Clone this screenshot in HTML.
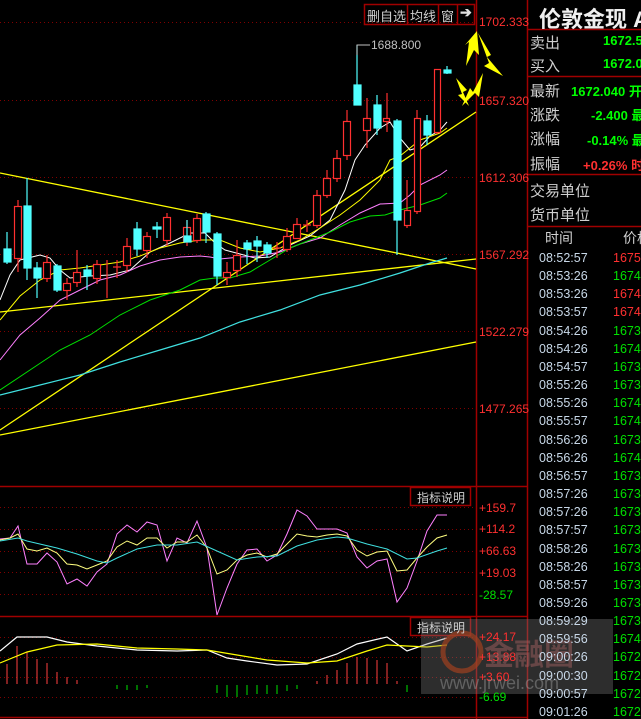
<!DOCTYPE html>
<html><head><meta charset="utf-8"><style>
body{margin:0;width:641px;height:719px;background:#000;overflow:hidden;position:relative;font-family:"Liberation Sans","Noto Sans CJK SC",sans-serif}
.t{position:absolute;white-space:nowrap}
.row{white-space:nowrap;height:18.16px;position:relative}
.row span{position:absolute;left:74px}
</style></head><body>
<svg width="641" height="719" style="position:absolute;left:0;top:0" xmlns="http://www.w3.org/2000/svg">
<g stroke="#800000" stroke-width="1" stroke-dasharray="1,3">
<line x1="0" y1="22.5" x2="476" y2="22.5"/><line x1="0" y1="100.5" x2="476" y2="100.5"/><line x1="0" y1="177.5" x2="476" y2="177.5"/><line x1="0" y1="254.5" x2="476" y2="254.5"/><line x1="0" y1="331.5" x2="476" y2="331.5"/><line x1="0" y1="408.5" x2="476" y2="408.5"/>
<line x1="0" y1="507.5" x2="476" y2="507.5"/><line x1="0" y1="529.5" x2="476" y2="529.5"/><line x1="0" y1="551.5" x2="476" y2="551.5"/><line x1="0" y1="572.5" x2="476" y2="572.5"/><line x1="0" y1="594.5" x2="476" y2="594.5"/>
<line x1="0" y1="637.5" x2="476" y2="637.5"/><line x1="0" y1="657.5" x2="476" y2="657.5"/><line x1="0" y1="677.5" x2="476" y2="677.5"/><line x1="0" y1="697.5" x2="476" y2="697.5"/>
</g>
<g stroke="#a00000" stroke-width="1.5" fill="none">
<line x1="0" y1="486.5" x2="527" y2="486.5"/><line x1="0" y1="616.5" x2="527" y2="616.5"/><line x1="0" y1="717.5" x2="527" y2="717.5"/>
<line x1="476.5" y1="0" x2="476.5" y2="719"/><line x1="527.5" y1="0" x2="527.5" y2="719"/>
<line x1="527" y1="29.5" x2="641" y2="29.5"/><line x1="527" y1="76.5" x2="641" y2="76.5"/><line x1="527" y1="174.5" x2="641" y2="174.5"/><line x1="527" y1="226.5" x2="641" y2="226.5"/>
<rect x="364.5" y="4.5" width="110" height="20"/><line x1="407.5" y1="4" x2="407.5" y2="24"/><line x1="438.5" y1="4" x2="438.5" y2="24"/><line x1="457.5" y1="4" x2="457.5" y2="24"/>
<rect x="410.5" y="487.5" width="60" height="18"/><rect x="410.5" y="617.5" width="60" height="18"/>
</g>
<g stroke="#ffff00" stroke-width="1.3" fill="none">
<line x1="0" y1="173" x2="476" y2="269"/><line x1="0" y1="312" x2="476" y2="259"/><line x1="0" y1="435" x2="476" y2="342"/><line x1="0" y1="430" x2="476" y2="112"/>
</g>
<polyline fill="none" stroke="#fff" stroke-width="1" points="0,300 10,275 20,260 40,255 50,258 60,270 70,278 90,276 110,275 130,270 150,252 170,243 190,233 205,233 215,243 225,250 240,254 255,258 270,257 290,245 310,236 330,220 345,190 355,160 365,145 380,128 390,122 400,138 410,150 420,147 430,136 440,130 447,122"/>
<polyline fill="none" stroke="#ffff00" stroke-width="1" points="0,320 20,296 40,280 60,270 80,268 100,265 120,262 140,256 160,248 180,243 200,240 220,240 240,248 260,252 280,248 300,240 320,228 340,215 360,200 380,180 390,160 400,156 420,140 440,133 447,128"/>
<polyline fill="none" stroke="#ff80ff" stroke-width="1" points="0,360 20,335 40,318 60,300 80,290 100,280 120,275 140,266 160,260 180,257 200,256 210,257 220,259 240,257 260,256 280,252 300,244 320,238 340,225 360,213 380,204 400,203 410,195 420,185 440,175 447,170"/>
<polyline fill="none" stroke="#00e000" stroke-width="1" points="0,390 30,370 60,350 90,335 120,315 150,300 180,290 200,280 215,278 230,278 250,272 270,260 290,248 310,240 330,232 350,222 370,216 385,215 400,210 420,205 440,198 447,193"/>
<polyline fill="none" stroke="#40e0e0" stroke-width="1.2" points="0,395 40,385 80,375 120,362 160,350 200,338 240,322 280,310 320,295 360,285 400,273 430,263 447,258"/>
<g stroke="#ff3030" stroke-width="1.2" fill="#000">
<line x1="18" y1="200" x2="18" y2="272"/><rect x="14.5" y="206.5" width="7" height="52"/>
<line x1="47" y1="255" x2="47" y2="282"/><rect x="43.5" y="262.5" width="7" height="16"/>
<line x1="67" y1="278" x2="67" y2="300"/><rect x="63.5" y="283.5" width="7" height="7"/>
<line x1="77" y1="250" x2="77" y2="287"/><rect x="73.5" y="272.5" width="7" height="10"/>
<line x1="97" y1="260" x2="97" y2="284"/><rect x="93.5" y="264.5" width="7" height="14"/>
<line x1="107" y1="260" x2="107" y2="298"/><line x1="117" y1="260" x2="117" y2="278"/><line x1="113" y1="267" x2="121" y2="267"/>
<line x1="127" y1="238" x2="127" y2="272"/><rect x="123.5" y="246.5" width="7" height="19"/>
<line x1="147" y1="232" x2="147" y2="258"/><rect x="143.5" y="236.5" width="7" height="14"/>
<line x1="167" y1="213" x2="167" y2="246"/><rect x="163.5" y="217.5" width="7" height="23"/>
<line x1="187" y1="220" x2="187" y2="246"/><rect x="183.5" y="227.5" width="7" height="14"/>
<line x1="197" y1="214" x2="197" y2="243"/><rect x="193.5" y="218.5" width="7" height="22"/>
<line x1="227" y1="262" x2="227" y2="285"/><rect x="223.5" y="272.5" width="7" height="5"/>
<line x1="237" y1="240" x2="237" y2="277"/><rect x="233.5" y="255.5" width="7" height="15"/>
<line x1="277" y1="242" x2="277" y2="258"/><line x1="273" y1="248" x2="281" y2="248"/>
<line x1="287" y1="228" x2="287" y2="252"/><rect x="283.5" y="236.5" width="7" height="13"/>
<line x1="297" y1="218" x2="297" y2="238"/><rect x="293.5" y="224.5" width="7" height="14"/>
<line x1="307" y1="220" x2="307" y2="232"/><line x1="303" y1="225" x2="311" y2="225"/>
<line x1="317" y1="190" x2="317" y2="228"/><rect x="313.5" y="195.5" width="7" height="30"/>
<line x1="327" y1="170" x2="327" y2="198"/><rect x="323.5" y="178.5" width="7" height="17"/>
<line x1="337" y1="150" x2="337" y2="182"/><rect x="333.5" y="158.5" width="7" height="20"/>
<line x1="347" y1="110" x2="347" y2="160"/><rect x="343.5" y="121.5" width="7" height="34"/>
<line x1="367" y1="98" x2="367" y2="148"/><rect x="363.5" y="118.5" width="7" height="12"/>
<line x1="387" y1="93" x2="387" y2="132"/><rect x="383.5" y="118.5" width="6" height="3"/>
<line x1="407" y1="180" x2="407" y2="228"/><rect x="404.5" y="210.5" width="6" height="15"/>
<line x1="417" y1="110" x2="417" y2="214"/><rect x="414.5" y="118.5" width="6" height="93"/>
<line x1="437" y1="69" x2="437" y2="134"/><rect x="434.5" y="69.5" width="6" height="63"/>
</g>
<g stroke="#50ffff" stroke-width="1.2" fill="#50ffff">
<line x1="7" y1="232" x2="7" y2="264"/><rect x="4" y="249" width="7" height="13"/>
<line x1="27" y1="178" x2="27" y2="280"/><rect x="24" y="206" width="7" height="62"/>
<line x1="37" y1="262" x2="37" y2="298"/><rect x="34" y="268" width="7" height="10"/>
<line x1="57" y1="264" x2="57" y2="292"/><rect x="54" y="266" width="7" height="24"/>
<line x1="87" y1="265" x2="87" y2="290"/><rect x="84" y="270" width="7" height="6"/>
<line x1="137" y1="222" x2="137" y2="256"/><rect x="134" y="229" width="7" height="20"/>
<line x1="157" y1="222" x2="157" y2="238"/><rect x="153" y="227" width="8" height="2"/>
<line x1="187" y1="220" x2="187" y2="240"/><rect x="184" y="236" width="7" height="6"/>
<line x1="206" y1="212" x2="206" y2="243"/><rect x="203" y="214" width="7" height="18"/>
<line x1="217" y1="232" x2="217" y2="285"/><rect x="214" y="234" width="7" height="42"/>
<line x1="247" y1="240" x2="247" y2="264"/><rect x="244" y="243" width="7" height="6"/>
<line x1="257" y1="236" x2="257" y2="262"/><rect x="254" y="241" width="7" height="5"/>
<line x1="267" y1="242" x2="267" y2="258"/><rect x="264" y="245" width="7" height="8"/>
<line x1="357" y1="45" x2="357" y2="105"/><rect x="354" y="85" width="7" height="20"/>
<line x1="377" y1="95" x2="377" y2="135"/><rect x="374" y="105" width="7" height="23"/>
<line x1="397" y1="119" x2="397" y2="255"/><rect x="394" y="121" width="7" height="99"/>
<line x1="427" y1="115" x2="427" y2="145"/><rect x="424" y="121" width="7" height="14"/>
<rect x="444" y="70" width="7" height="3"/><line x1="447" y1="66" x2="447" y2="74"/>
</g>
<polyline fill="none" stroke="#c0c0c0" stroke-width="1" points="357,55 357,45 370,45"/>
<g fill="#ffff00">
<polygon points="477,31 479,55 474,50 466,66 469,42 465,45"/>
<polygon points="478,33 491,55 487,57 503,76 484,66 489,63"/>
<polygon points="456,78 467,90 463,92 469,106 458,95 462,94"/>
<polygon points="462,106 470,88 473,92 483,73 479,97 475,93"/>
</g>
<polyline fill="none" stroke="#ff80ff" stroke-width="1" points="0,539 10,538 18,526 27,564 37,564 47,553 57,562 67,584 77,579 87,586 97,572 107,564 117,534 127,525 137,532 147,522 157,525 167,561 177,538 187,543 197,521 207,548 217,615 227,588 237,564 247,550 257,549 267,561 277,555 287,534 297,510 307,516 317,529 327,529 337,529 347,533 357,557 367,568 377,561 387,559 397,602 407,588 417,561 427,531 437,515 447,515"/>
<polyline fill="none" stroke="#ffff80" stroke-width="1" points="0,540 10,538 18,534 27,549 37,551 47,548 57,553 67,564 77,565 87,569 97,565 107,561 117,547 127,541 137,545 147,538 157,538 167,548 177,542 187,542 197,535 207,548 217,574 227,570 237,560 247,555 257,553 267,557 277,554 287,544 297,534 307,536 317,537 327,535 337,534 347,536 357,550 367,556 377,552 387,551 397,571 407,570 417,558 427,547 437,538 447,535"/>
<polyline fill="none" stroke="#40e0e0" stroke-width="1" points="0,541 18,538 27,541 57,548 77,554 97,561 107,563 117,558 137,549 157,545 177,545 197,542 217,551 237,560 257,557 277,556 297,546 317,540 337,537 347,538 367,544 387,549 407,559 417,558 437,551 447,548"/>
<g stroke="#ff4040" stroke-width="1"><line x1="7" y1="664" x2="7" y2="684"/><line x1="17" y1="646" x2="17" y2="684"/><line x1="27" y1="652" x2="27" y2="684"/><line x1="37" y1="659" x2="37" y2="684"/><line x1="47" y1="663" x2="47" y2="684"/><line x1="57" y1="672" x2="57" y2="684"/><line x1="67" y1="677" x2="67" y2="684"/><line x1="77" y1="680" x2="77" y2="684"/><line x1="317" y1="681" x2="317" y2="684"/><line x1="327" y1="675" x2="327" y2="684"/><line x1="337" y1="670" x2="337" y2="684"/><line x1="347" y1="663" x2="347" y2="684"/><line x1="357" y1="657" x2="357" y2="684"/><line x1="367" y1="658" x2="367" y2="684"/><line x1="377" y1="660" x2="377" y2="684"/><line x1="387" y1="663" x2="387" y2="684"/><line x1="397" y1="681" x2="397" y2="684"/></g>
<g stroke="#00e000" stroke-width="1"><line x1="117" y1="685" x2="117" y2="689"/><line x1="127" y1="685" x2="127" y2="690"/><line x1="137" y1="685" x2="137" y2="690"/><line x1="147" y1="685" x2="147" y2="688"/><line x1="217" y1="685" x2="217" y2="693"/><line x1="227" y1="685" x2="227" y2="697"/><line x1="237" y1="685" x2="237" y2="697"/><line x1="247" y1="685" x2="247" y2="695"/><line x1="257" y1="685" x2="257" y2="694"/><line x1="267" y1="685" x2="267" y2="694"/><line x1="277" y1="685" x2="277" y2="694"/><line x1="287" y1="685" x2="287" y2="691"/><line x1="297" y1="685" x2="297" y2="689"/><line x1="407" y1="685" x2="407" y2="692"/></g>
<polyline fill="none" stroke="#fff" stroke-width="1.2" points="0,651 17,637 47,637 67,642 97,646 137,650 177,651 207,650 227,658 247,661 277,665 307,664 337,654 357,644 387,637 397,644 407,651 427,644 447,638"/>
<polyline fill="none" stroke="#ffff00" stroke-width="1.2" points="0,663 27,652 57,645 97,644 137,648 177,649 207,650 237,655 267,660 307,663 337,661 367,651 387,645 407,646 427,647 447,645"/>
<rect x="421" y="619" width="192" height="75" fill="#808080" fill-opacity="0.35"/>
<circle cx="462" cy="652" r="19" fill="none" stroke="#a04020" stroke-width="5" stroke-opacity="0.7"/>
</svg>
<div class="t" style="left:367px;top:6px;font-size:13px;color:#d0d0d0">删自选</div>
<div class="t" style="left:410px;top:6px;font-size:13px;color:#d0d0d0">均线</div>
<div class="t" style="left:441px;top:6px;font-size:13px;color:#d0d0d0">窗</div>
<div class="t" style="left:460px;top:4px;font-size:14px;color:#e0e0e0;font-weight:bold">➔</div>
<div class="t" style="left:371px;top:38px;font-size:12px;color:#c0c0c0">1688.800</div>
<div class="t" style="left:479px;top:15px;font-size:12px;color:#ff3030">1702.333</div>
<div class="t" style="left:479px;top:94px;font-size:12px;color:#ff3030">1657.320</div>
<div class="t" style="left:479px;top:171px;font-size:12px;color:#ff3030">1612.306</div>
<div class="t" style="left:479px;top:248px;font-size:12px;color:#ff3030">1567.292</div>
<div class="t" style="left:479px;top:325px;font-size:12px;color:#ff3030">1522.279</div>
<div class="t" style="left:479px;top:402px;font-size:12px;color:#ff3030">1477.265</div>
<div class="t" style="left:417px;top:489px;font-size:12px;color:#d0d0d0">指标说明</div>
<div class="t" style="left:417px;top:619px;font-size:12px;color:#d0d0d0">指标说明</div>
<div class="t" style="left:479px;top:501px;font-size:12px;color:#ff3030">+159.7</div>
<div class="t" style="left:479px;top:522px;font-size:12px;color:#ff3030">+114.2</div>
<div class="t" style="left:479px;top:544px;font-size:12px;color:#ff3030">+66.63</div>
<div class="t" style="left:479px;top:566px;font-size:12px;color:#ff3030">+19.03</div>
<div class="t" style="left:479px;top:588px;font-size:12px;color:#00e000">-28.57</div>
<div class="t" style="left:479px;top:630px;font-size:12px;color:#ff3030">+24.17</div>
<div class="t" style="left:479px;top:650px;font-size:12px;color:#ff3030">+13.88</div>
<div class="t" style="left:479px;top:670px;font-size:12px;color:#ff3030">+3.60</div>
<div class="t" style="left:479px;top:690px;font-size:12px;color:#00e000">-6.69</div>
<div class="t" style="left:484px;top:630px;font-size:30px;color:#a06060;opacity:.5;font-weight:bold">金融圈</div>
<div class="t" style="left:440px;top:673px;font-size:18px;color:#b0b0b0;opacity:.4">www.jrwei.com</div>
<div style="position:absolute;left:529px;top:0;width:112px;height:719px;overflow:hidden;font-size:15px;color:#d0d0d0">
<div class="t" style="left:10px;top:2px;font-size:22px;font-weight:bold;color:#f0f0f0">伦敦金现 A</div>
<div class="t" style="left:1px;top:32px">卖出</div><div class="t" style="left:74px;top:33px;color:#00ff00;font-weight:bold;font-size:13px">1672.52</div>
<div class="t" style="left:1px;top:55px">买入</div><div class="t" style="left:74px;top:56px;color:#00ff00;font-weight:bold;font-size:13px">1672.04</div>
<div class="t" style="left:1px;top:80px">最新</div><div class="t" style="left:42px;top:81px;color:#00ff00;font-weight:bold;font-size:13px">1672.040 开</div>
<div class="t" style="left:1px;top:104px">涨跌</div><div class="t" style="left:62px;top:105px;color:#00ff00;font-weight:bold;font-size:13px">-2.400 最</div>
<div class="t" style="left:1px;top:128px">涨幅</div><div class="t" style="left:58px;top:130px;color:#00ff00;font-weight:bold;font-size:13px">-0.14% 最</div>
<div class="t" style="left:1px;top:153px">振幅</div><div class="t" style="left:54px;top:155px;color:#ff3030;font-weight:bold;font-size:13px">+0.26% 时</div>
<div class="t" style="left:1px;top:180px">交易单位</div>
<div class="t" style="left:1px;top:204px">货币单位</div>
<div class="t" style="left:16px;top:228px;font-size:14px">时间</div><div class="t" style="left:94px;top:228px;font-size:14px">价格</div>
</div>
<div style="position:absolute;left:539px;top:249px;width:102px;height:470px;overflow:hidden;font-size:12.5px;line-height:18.16px;color:#c8d8e8">
<div class="row">08:52:57<span style="color:#ff3030">1675.28</span></div>
<div class="row">08:53:26<span style="color:#00e000">1674.88</span></div>
<div class="row">08:53:26<span style="color:#ff3030">1674.98</span></div>
<div class="row">08:53:57<span style="color:#ff3030">1674.98</span></div>
<div class="row">08:54:26<span style="color:#00e000">1673.88</span></div>
<div class="row">08:54:26<span style="color:#00e000">1674.08</span></div>
<div class="row">08:54:57<span style="color:#00e000">1673.88</span></div>
<div class="row">08:55:26<span style="color:#00e000">1673.88</span></div>
<div class="row">08:55:26<span style="color:#00e000">1674.08</span></div>
<div class="row">08:55:57<span style="color:#00e000">1674.08</span></div>
<div class="row">08:56:26<span style="color:#00e000">1673.88</span></div>
<div class="row">08:56:26<span style="color:#00e000">1674.08</span></div>
<div class="row">08:56:57<span style="color:#00e000">1673.88</span></div>
<div class="row">08:57:26<span style="color:#00e000">1673.88</span></div>
<div class="row">08:57:26<span style="color:#00e000">1673.88</span></div>
<div class="row">08:57:57<span style="color:#00e000">1673.88</span></div>
<div class="row">08:58:26<span style="color:#00e000">1673.88</span></div>
<div class="row">08:58:26<span style="color:#00e000">1673.88</span></div>
<div class="row">08:58:57<span style="color:#00e000">1673.88</span></div>
<div class="row">08:59:26<span style="color:#00e000">1673.88</span></div>
<div class="row">08:59:29<span style="color:#00e000">1673.88</span></div>
<div class="row">08:59:56<span style="color:#00e000">1674.08</span></div>
<div class="row">09:00:26<span style="color:#00e000">1672.88</span></div>
<div class="row">09:00:30<span style="color:#00e000">1672.88</span></div>
<div class="row">09:00:57<span style="color:#00e000">1672.88</span></div>
<div class="row">09:01:26<span style="color:#00e000">1672.88</span></div>
</div>
</body></html>
